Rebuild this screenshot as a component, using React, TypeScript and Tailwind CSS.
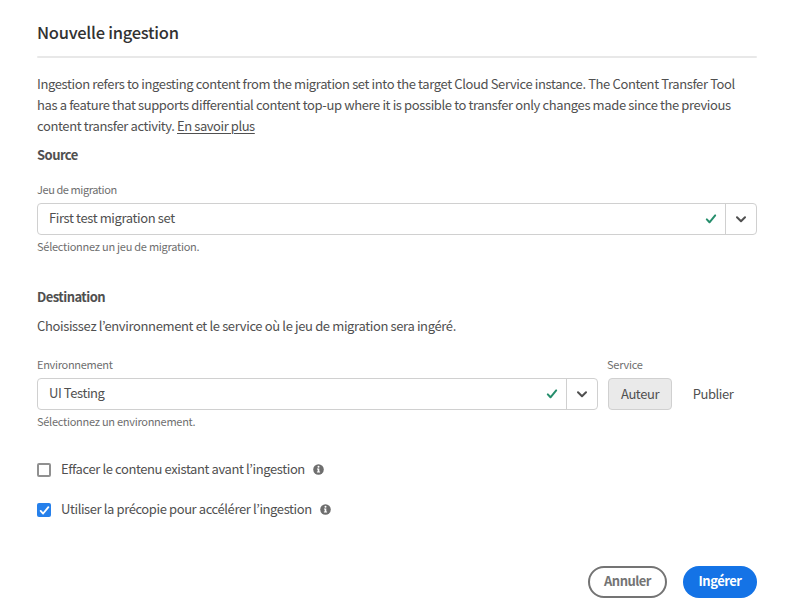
import type { ReactNode } from 'react';

function CheckMark({ className }: { className: string }) {
  return (
    <svg className={className} viewBox="0 0 12 12" fill="none" stroke="currentColor" strokeWidth="2" strokeLinecap="round" strokeLinejoin="round">
      <path d="M1.8 6.4 4.5 9.3 10.2 2.4" />
    </svg>
  );
}

function InfoIcon() {
  return (
    <svg className="mb-px size-[11px] shrink-0" viewBox="0 0 11 11">
      <circle cx="5.5" cy="5.5" r="5.3" fill="#6e6e6e" />
      <circle cx="5.5" cy="2.7" r="1" fill="#fff" />
      <path d="M4 4.5h2.3v3H7.1v1H3.9v-1h.8v-2H4z" fill="#fff" />
    </svg>
  );
}

function Select({ value, className, textClass }: { value: string; className: string; textClass: string }) {
  return (
    <div className={`flex h-8 rounded-[4px] border border-[#d0d0d0] ${className}`}>
      <div className="flex min-w-0 flex-1 items-center justify-between pr-2 pl-[11px]">
        <span className={`pb-[2px] text-[13px] leading-5 text-[#505050] ${textClass}`}>{value}</span>
        <CheckMark className="size-3 text-[#268e6c]" />
      </div>
      <div className="flex w-[31px] items-center justify-center border-l border-[#d0d0d0]">
        <svg className="size-[10px] text-[#505050]" viewBox="0 0 10 10" fill="none" stroke="currentColor" strokeWidth="2" strokeLinecap="round" strokeLinejoin="round">
          <path d="M1 3.2 5 7.2 9 3.2" />
        </svg>
      </div>
    </div>
  );
}

function Option({ checked, children, textClass }: { checked?: boolean; children: ReactNode; textClass: string }) {
  return (
    <div className="flex h-5 items-center">
      {checked ? (
        <span className="flex size-[14px] items-center justify-center rounded-[2px] bg-[#2680eb] text-white">
          <CheckMark className="size-[11px]" />
        </span>
      ) : (
        <span className="size-[14px] rounded-[2px] border-2 border-[#909090]" />
      )}
      <span className={`mr-2 ml-[10px] pb-[2px] text-[13px] leading-5 text-[#505050] ${textClass}`}>{children}</span>
      <InfoIcon />
    </div>
  );
}

export default function App() {
  return (
    <main className="h-[610px] w-[793px] overflow-hidden bg-white px-[37px] pt-[19px] pr-9 font-['Noto_Sans_CJK_KR','Noto_Sans',sans-serif] whitespace-nowrap text-[#505050]">
      <h1 className="h-[37px] text-[16.5px] leading-[26px] font-medium tracking-[-0.27px] text-[#323232]">Nouvelle ingestion</h1>
      <div className="h-[2px] rounded-full bg-[#e8e8e8]" />
      <div className="mt-[15px] text-[13px] leading-[21px] tracking-[-0.38px]">
        <p>Ingestion refers to ingesting content from the migration set into the target Cloud Service instance. The Content Transfer Tool</p>
        <p>has a feature that supports differential content top-up where it is possible to transfer only changes made since the previous</p>
        <p>content transfer activity. <a className="tracking-[-0.43px] underline decoration-1 underline-offset-2">En savoir plus</a></p>
      </div>
      <h2 className="mt-[9px] text-[13px] leading-5 font-bold tracking-[-0.55px]">Source</h2>
      <div className="mt-4 text-[11px] leading-4 tracking-[-0.42px] text-[#6e6e6e]">Jeu de migration</div>
      <Select value="First test migration set" className="mt-[6px]" textClass="tracking-[-0.38px]" />
      <div className="mt-[3px] text-[11px] leading-4 tracking-[-0.26px] text-[#6e6e6e]">Sélectionnez un jeu de migration.</div>
      <h2 className="mt-[33px] text-[13px] leading-5 font-bold tracking-[-0.55px]">Destination</h2>
      <p className="mt-[9px] text-[13px] leading-5 tracking-[-0.365px]">Choisissez l’environnement et le service où le jeu de migration sera ingéré.</p>
      <div className="mt-5 flex gap-[10px]">
        <div className="w-[561px]">
          <div className="text-[11px] leading-4 tracking-[-0.3px] text-[#6e6e6e]">Environnement</div>
          <Select value="UI Testing" className="mt-[6px]" textClass="tracking-[-0.42px]" />
          <div className="mt-[3px] text-[11px] leading-4 tracking-[-0.27px] text-[#6e6e6e]">Sélectionnez un environnement.</div>
        </div>
        <div>
          <div className="-ml-px text-[11px] leading-4 tracking-[-0.25px] text-[#6e6e6e]">Service</div>
          <div className="mt-[6px] flex h-8 text-[13px] tracking-[-0.42px]">
            <button className="w-16 rounded-[4px] border border-[#d0d0d0] bg-[#eaeaea]">Auteur</button>
            <button className="ml-[9px] w-16">Publier</button>
          </div>
        </div>
      </div>
      <div className="mt-[31px] flex flex-col gap-5">
        <Option textClass="tracking-[-0.4px]">Effacer le contenu existant avant l’ingestion</Option>
        <Option checked textClass="tracking-[-0.4px]">Utiliser la précopie pour accélérer l’ingestion</Option>
      </div>
      <div className="mt-[46px] flex justify-end gap-4 text-[13px] leading-5 font-bold tracking-[-0.52px]">
        <button className="h-8 w-[79px] rounded-full border-2 border-[#747474] pb-[2px] text-[#747474]">Annuler</button>
        <button className="h-8 w-[74px] rounded-full bg-[#1473e6] pb-[2px] text-white">Ingérer</button>
      </div>
    </main>
  );
}
